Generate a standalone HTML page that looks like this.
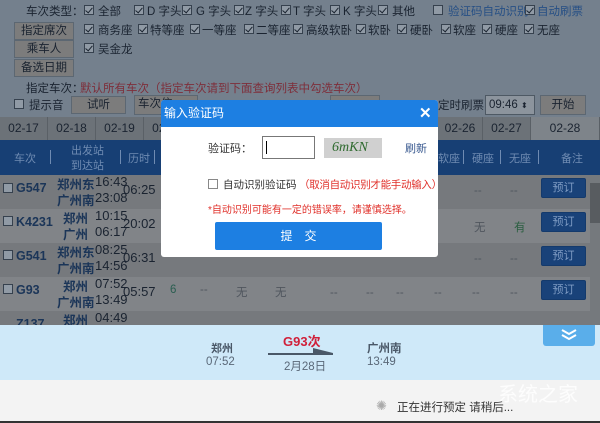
<!DOCTYPE html><html><head><meta charset="utf-8"><style>
*{margin:0;padding:0;box-sizing:border-box}
body{width:600px;height:423px;overflow:hidden;position:relative;background:#74808d;font-family:"Liberation Sans","Noto Sans CJK SC",sans-serif;font-size:11.5px;color:#1a2330}
.a{position:absolute;white-space:nowrap}
.cb{position:absolute;width:10px;height:10px;border:1px solid #36414e;background:#909aa5}
.cb:after{content:"";position:absolute;left:2px;top:0px;width:3px;height:6px;border:solid #1a2330;border-width:0 1.5px 1.5px 0;transform:rotate(40deg)}
.cb.n:after{display:none}
.btn{position:absolute;background:#7c7c7c;border:1px solid #5c6772;text-align:center;color:#1a2330;line-height:16px}
.dt{position:absolute;top:117px;height:23px;line-height:23px;text-align:center;background:#6c7278;border-right:1px solid #5a6066;font-size:12px;color:#1a2330}
.row{position:absolute;left:0;width:590px;height:34px}
.tr{font-weight:bold;color:#1b3558;font-size:12.5px}
.bk{position:absolute;left:541px;width:45px;height:20px;background:#194279;border:1px solid #143a6c;border-radius:2px;color:#7f9cc4;text-align:center;line-height:18px;font-size:11px}
.g{color:#50565e}
.t{font-size:13px;color:#1a2330}
</style></head><body>
<div class="a" style="left:26px;top:3px">车次类型：</div>
<div class="cb" style="left:84px;top:5px"></div><div class="a" style="left:98px;top:3px">全部</div>
<div class="cb" style="left:134px;top:5px"></div><div class="a" style="left:147px;top:3px">D 字头</div>
<div class="cb" style="left:182px;top:5px"></div><div class="a" style="left:196px;top:3px">G 字头</div>
<div class="cb" style="left:234px;top:5px"></div><div class="a" style="left:245px;top:3px">Z 字头</div>
<div class="cb" style="left:281px;top:5px"></div><div class="a" style="left:293px;top:3px">T 字头</div>
<div class="cb" style="left:330px;top:5px"></div><div class="a" style="left:343px;top:3px">K 字头</div>
<div class="cb" style="left:378px;top:5px"></div><div class="a" style="left:392px;top:3px">其他</div>
<div class="cb n" style="left:433px;top:5px"></div><div class="a" style="left:448px;top:3px;color:#264f85">验证码自动识别</div>
<div class="cb" style="left:525px;top:5px"></div><div class="a" style="left:537px;top:3px;color:#264f85">自动刷票</div>

<div class="btn" style="left:14px;top:22px;width:60px;height:18px">指定席次</div>
<div class="cb" style="left:84px;top:24px"></div><div class="a" style="left:98px;top:22px">商务座</div>
<div class="cb" style="left:138px;top:24px"></div><div class="a" style="left:150px;top:22px">特等座</div>
<div class="cb" style="left:190px;top:24px"></div><div class="a" style="left:202px;top:22px">一等座</div>
<div class="cb" style="left:244px;top:24px"></div><div class="a" style="left:256px;top:22px">二等座</div>
<div class="cb" style="left:293px;top:24px"></div><div class="a" style="left:306px;top:22px">高级软卧</div>
<div class="cb" style="left:356px;top:24px"></div><div class="a" style="left:368px;top:22px">软卧</div>
<div class="cb" style="left:397px;top:24px"></div><div class="a" style="left:410px;top:22px">硬卧</div>
<div class="cb" style="left:441px;top:24px"></div><div class="a" style="left:453px;top:22px">软座</div>
<div class="cb" style="left:482px;top:24px"></div><div class="a" style="left:495px;top:22px">硬座</div>
<div class="cb" style="left:524px;top:24px"></div><div class="a" style="left:537px;top:22px">无座</div>

<div class="btn" style="left:14px;top:40px;width:60px;height:18px">乘车人</div>
<div class="cb" style="left:84px;top:43px"></div><div class="a" style="left:98px;top:41px">吴金龙</div>
<div class="btn" style="left:14px;top:59px;width:60px;height:18px">备选日期</div>
<div class="a" style="left:26px;top:80px">指定车次：</div>
<div class="a" style="left:80px;top:80px;color:#7e2e3a">默认所有车次（指定车次请到下面查询列表中勾选车次）</div>
<div class="cb n" style="left:14px;top:99px"></div><div class="a" style="left:29px;top:97px">提示音</div>
<div class="btn" style="left:71px;top:96px;width:55px;height:18px">试听</div>
<div class="btn" style="left:134px;top:95px;width:64px;height:20px;text-align:left;padding-left:3px">车次信</div>
<div class="btn" style="left:330px;top:95px;width:50px;height:20px"></div>
<div class="a" style="left:438px;top:97px">定时刷票：</div>
<div class="a" style="left:485px;top:95px;width:50px;height:20px;border:1px solid #4e5964;background:#8c949d;padding-left:3px;line-height:18px">09:46 <span style="font-size:8px">⬍</span></div>
<div class="btn" style="left:540px;top:95px;width:46px;height:20px;line-height:18px">开始</div>

<div class="dt" style="left:0;width:48px">02-17</div>
<div class="dt" style="left:48px;width:48px">02-18</div>
<div class="dt" style="left:96px;width:48px">02-19</div>
<div class="dt" style="left:144px;width:48px">02-20</div>
<div class="dt" style="left:438px;width:45px">02-26</div>
<div class="dt" style="left:483px;width:48px">02-27</div>
<div class="dt" style="left:531px;width:69px;background:#7e848a">02-28</div>

<div class="a" style="left:0;top:140px;width:600px;height:35px;background:#173f74;color:#6f8bb2;font-size:11px">
<span class="a" style="left:14px;top:10px">车次</span>
<span class="a" style="left:71px;top:2px">出发站</span><span class="a" style="left:71px;top:17px">到达站</span>
<span class="a" style="left:128px;top:10px">历时</span>
<span class="a" style="left:438px;top:10px">软座</span><span class="a" style="left:472px;top:10px">硬座</span><span class="a" style="left:509px;top:10px">无座</span><span class="a" style="left:561px;top:10px">备注</span>
<span class="a" style="left:50px;top:10px;width:1px;height:14px;background:#6f8bb2"></span>
<span class="a" style="left:120px;top:10px;width:1px;height:14px;background:#6f8bb2"></span>
<span class="a" style="left:154px;top:10px;width:1px;height:14px;background:#6f8bb2"></span>
<span class="a" style="left:463px;top:10px;width:1px;height:14px;background:#6f8bb2"></span>
<span class="a" style="left:500px;top:10px;width:1px;height:14px;background:#6f8bb2"></span>
<span class="a" style="left:538px;top:10px;width:1px;height:14px;background:#6f8bb2"></span>
</div>

<div class="row" style="top:175px;background:#76797d"></div>
<div class="row" style="top:209px;background:#818488"></div>
<div class="row" style="top:243px;background:#76797d"></div>
<div class="row" style="top:277px;background:#818488"></div>
<div class="row" style="top:311px;background:#76797d"></div>
<div class="a" style="left:590px;top:175px;width:10px;height:150px;background:#75797d"></div>
<div class="a" style="left:590px;top:183px;width:10px;height:40px;background:#585c60"></div>

<div class="cb n" style="left:3px;top:183px"></div><div class="a tr" style="left:16px;top:181px">G547</div>
<div class="a tr" style="left:57px;top:174px">郑州东</div><div class="a tr" style="left:57px;top:190px">广州南</div>
<div class="a t" style="left:95px;top:174px">16:43</div><div class="a t" style="left:95px;top:190px">23:08</div>
<div class="a t" style="left:123px;top:182px">06:25</div>

<div class="cb n" style="left:3px;top:216px"></div><div class="a tr" style="left:16px;top:215px">K4231</div>
<div class="a tr" style="left:63px;top:208px">郑州</div><div class="a tr" style="left:63px;top:224px">广州</div>
<div class="a t" style="left:95px;top:208px">10:15</div><div class="a t" style="left:95px;top:224px">06:17</div>
<div class="a t" style="left:123px;top:216px">20:02</div>

<div class="cb n" style="left:3px;top:250px"></div><div class="a tr" style="left:16px;top:249px">G541</div>
<div class="a tr" style="left:57px;top:242px">郑州东</div><div class="a tr" style="left:57px;top:258px">广州南</div>
<div class="a t" style="left:95px;top:242px">08:25</div><div class="a t" style="left:95px;top:258px">14:56</div>
<div class="a t" style="left:123px;top:250px">06:31</div>

<div class="cb n" style="left:3px;top:284px"></div><div class="a tr" style="left:16px;top:283px">G93</div>
<div class="a tr" style="left:63px;top:276px">郑州</div><div class="a tr" style="left:57px;top:292px">广州南</div>
<div class="a t" style="left:95px;top:276px">07:52</div><div class="a t" style="left:95px;top:292px">13:49</div>
<div class="a t" style="left:123px;top:284px">05:57</div>
<div class="a" style="left:170px;top:284px;color:#2a5e50">6</div>
<div class="a g" style="left:200px;top:284px">--</div><div class="a g" style="left:236px;top:284px">无</div><div class="a g" style="left:275px;top:284px">无</div>

<div class="a tr" style="left:16px;top:317px">Z137</div>
<div class="a tr" style="left:63px;top:310px">郑州</div><div class="a t" style="left:95px;top:310px">04:49</div>

<div class="a g" style="left:474px;top:185px">--</div><div class="a g" style="left:510px;top:185px">--</div>
<div class="a g" style="left:474px;top:219px">无</div><div class="a" style="left:514px;top:219px;color:#2a5e40">有</div>
<div class="a g" style="left:474px;top:253px">--</div><div class="a g" style="left:510px;top:253px">--</div>
<div class="a g" style="left:330px;top:287px">--</div><div class="a g" style="left:366px;top:287px">--</div><div class="a g" style="left:396px;top:287px">--</div><div class="a g" style="left:434px;top:287px">--</div><div class="a g" style="left:472px;top:287px">--</div><div class="a g" style="left:510px;top:287px">--</div>
<div class="bk" style="top:178px">预订</div><div class="bk" style="top:212px">预订</div><div class="bk" style="top:246px">预订</div><div class="bk" style="top:280px">预订</div>

<div class="a" style="left:0;top:325px;width:600px;height:55px;background:#cfe9f9"></div>
<div class="a" style="left:0;top:380px;width:600px;height:41px;background:#f3f3f3"></div>
<div class="a" style="left:0;top:421px;width:600px;height:2px;background:#333"></div>
<div class="a" style="left:543px;top:325px;width:52px;height:21px;background:#5aaeea;border-radius:0 0 3px 3px;overflow:hidden"><svg width="52" height="21"><path d="M19 5l7 4 7-4M19 10l7 4 7-4" fill="none" stroke="#fff" stroke-width="2"/></svg></div>
<div class="a" style="left:211px;top:340px;font-weight:bold;color:#4a5868;font-size:11px">郑州</div>
<div class="a" style="left:206px;top:356px;color:#5a6878">07:52</div>
<div class="a" style="left:283px;top:331px;font-weight:bold;color:#d0203a;font-size:13px">G93次</div>
<div class="a" style="left:268px;top:353px;width:65px;height:2px;background:#4a5868"></div>
<div class="a" style="left:313px;top:348px;width:0;height:0;border-left:20px solid #4a5868;border-top:5px solid transparent"></div>
<div class="a" style="left:284px;top:358px;color:#5a6878">2月28日</div>
<div class="a" style="left:367px;top:340px;font-weight:bold;color:#4a5868">广州南</div>
<div class="a" style="left:367px;top:356px;color:#5a6878">13:49</div>
<div class="a" style="left:376px;top:398px;color:#aaa;font-size:13px">✺</div>
<div class="a" style="left:397px;top:399px;color:#333">正在进行预定 请稍后...</div>
<div class="a" style="left:498px;top:378px;color:#fff;font-size:20px;opacity:.85">系统之家</div>

<div class="a" style="left:161px;top:100px;width:277px;height:157px;background:#fff;border-radius:3px;overflow:hidden;font-size:11px">
<div class="a" style="left:0;top:0;width:277px;height:27px;background:#1d7fe2;color:#fff;font-size:12px;line-height:27px;padding-left:3px">输入验证码<span style="position:absolute;left:258px;top:0;font-size:15px;font-weight:bold">✕</span></div>
<div class="a" style="left:47px;top:40px;color:#333">验证码：</div>
<div class="a" style="left:101px;top:36px;width:53px;height:23px;border:1px solid #777"><div style="position:absolute;left:3px;top:4px;width:1px;height:13px;background:#000"></div></div>
<div class="a" style="left:163px;top:38px;width:58px;height:20px;background:#d0d0d0;color:#2e6a2e;font-style:italic;font-size:14px;font-family:'Liberation Serif',serif;padding-left:8px;line-height:20px">6mKN</div>
<div class="a" style="left:244px;top:40px;color:#3a5a90">刷新</div>
<div class="cb n" style="left:47px;top:79px;background:#fff;border-color:#888"></div>
<div class="a" style="left:62px;top:77px;color:#333;font-size:10.5px">自动识别验证码</div>
<div class="a" style="left:138px;top:77px;color:#e0302a;font-size:10.5px;letter-spacing:-0.3px">（取消自动识别才能手动输入）</div>
<div class="a" style="left:47px;top:101px;color:#e0302a;font-size:10px">*自动识别可能有一定的错误率，请谨慎选择。</div>
<div class="a" style="left:54px;top:122px;width:167px;height:28px;background:#1d7fe2;border-radius:2px;color:#fff;text-align:center;line-height:28px;font-size:12px">提　交</div>
</div>
</body></html>
